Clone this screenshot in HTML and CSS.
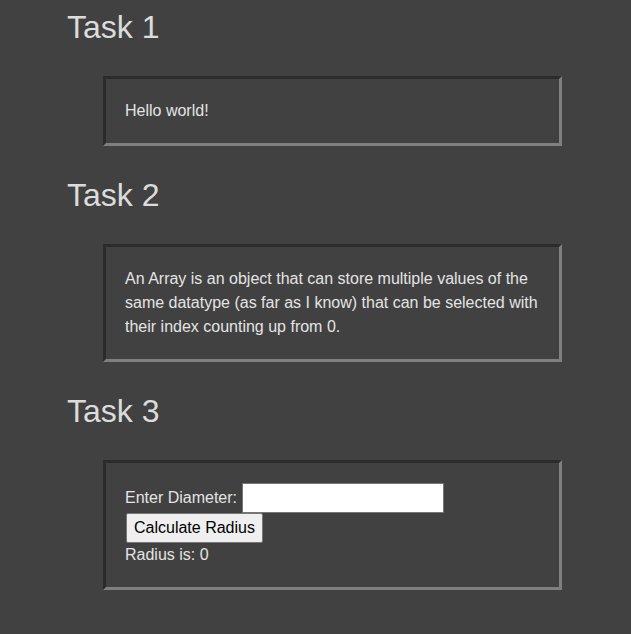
FILE: index.html
```html
<!DOCTYPE html>
<html>
<head>
<meta charset="utf-8">
<link rel="stylesheet" href="styles.css">
</head>
<body>
<main class="page">
  <h1 class="task-title">Task 1</h1>
  <div class="task-box">Hello world!</div>

  <h1 class="task-title">Task 2</h1>
  <div class="task-box">An Array is an object that can store multiple values of the same datatype (as far as I know) that can be selected with their index counting up from 0.</div>

  <h1 class="task-title">Task 3</h1>
  <div class="task-box">
    <label class="field-label">Enter Diameter:</label> <input class="diameter-input" type="text"><br>
    <button class="calc-btn">Calculate Radius</button><br>
    <span class="result">Radius is: 0</span>
  </div>
</main>
</body>
</html>
```
FILE: styles.css
```css
html, body {
  margin: 0;
  padding: 0;
  background: #414141;
}
body {
  font-family: "Liberation Sans", Arial, sans-serif;
  color: #e4e4e4;
}
.page {
  padding: 8px 0 0 67px;
}
.task-title {
  margin: 0 0 30px 0;
  padding-top: 1px;
  font-size: 32px;
  font-weight: normal;
  line-height: normal;
  color: #dcdcdc;
}
.task-box {
  box-sizing: border-box;
  width: 459px;
  margin: 0 0 30px 36px;
  padding: 20px 20px 20px 19px;
  font-size: 16px;
  line-height: 24px;
  border-style: solid;
  border-width: 3px;
  border-color: #2b2b2b #7f7f7f #7f7f7f #2b2b2b;
}
.diameter-input {
  box-sizing: border-box;
  width: 202px;
  height: 30px;
  margin: 0;
  padding: 1px 2px;
  font-family: "Liberation Sans", Arial, sans-serif;
  font-size: 16px;
  background: #ffffff;
  border: 1px solid #767676;
  vertical-align: baseline;
}
.calc-btn {
  box-sizing: border-box;
  height: 30px;
  margin: 0 0 0 1px;
  padding: 1px 7px;
  font-family: "Liberation Sans", Arial, sans-serif;
  font-size: 16px;
  color: #000000;
  background: #efefef;
  border: 1px solid #767676;
  border-radius: 2px;
}
```
